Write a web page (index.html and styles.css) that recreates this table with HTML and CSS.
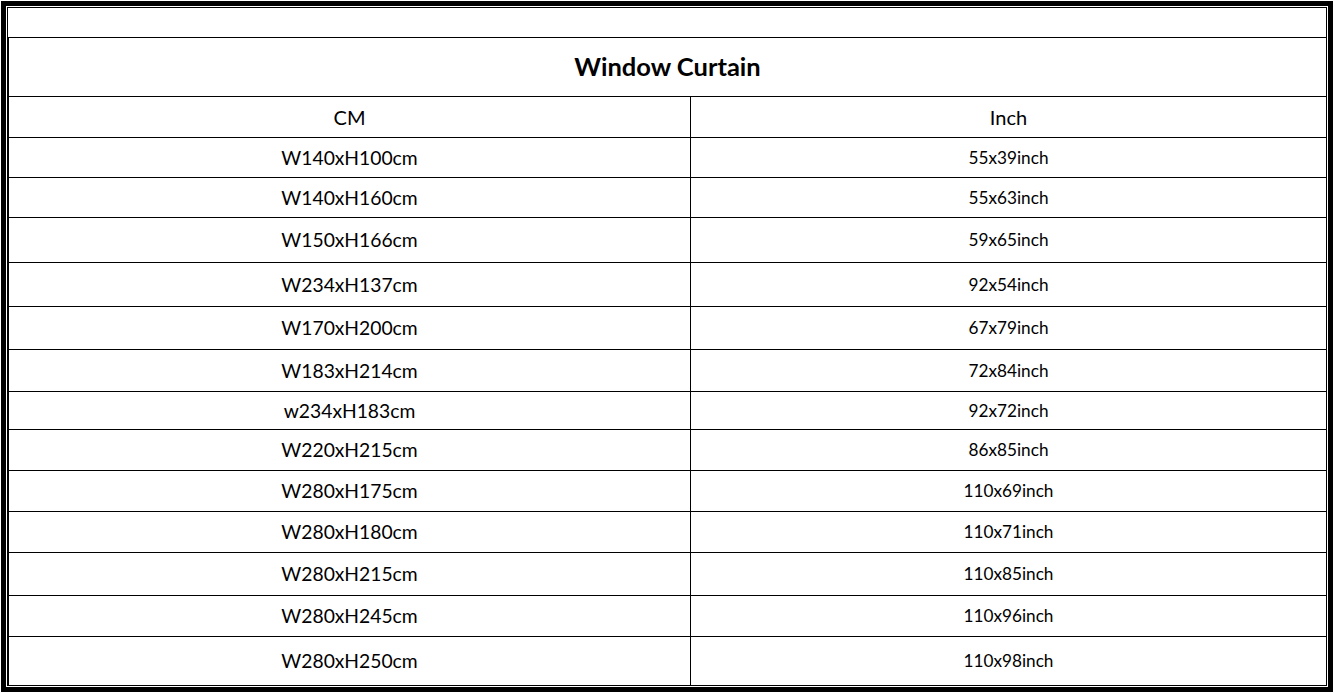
FILE: index.html
```html
<!DOCTYPE html>
<html lang="en">
<head>
<meta charset="utf-8">
<title>Window Curtain</title>
<link rel="stylesheet" href="styles.css">
</head>
<body>
<div class="frame">
  <div class="inner">
    <div class="spacer"></div>
    <table class="sizes">
      <colgroup><col class="col-cm"><col class="col-in"></colgroup>
      <tr class="r59"><th class="title" colspan="2">Window Curtain</th></tr>
      <tr class="r41"><td class="head">CM</td><td class="head">Inch</td></tr>
      <tr class="r40"><td class="cm">W140xH100cm</td><td class="in">55x39inch</td></tr>
      <tr class="r40"><td class="cm">W140xH160cm</td><td class="in">55x63inch</td></tr>
      <tr class="r45"><td class="cm">W150xH166cm</td><td class="in">59x65inch</td></tr>
      <tr class="r44"><td class="cm">W234xH137cm</td><td class="in">92x54inch</td></tr>
      <tr class="r43"><td class="cm">W170xH200cm</td><td class="in">67x79inch</td></tr>
      <tr class="r42"><td class="cm">W183xH214cm</td><td class="in">72x84inch</td></tr>
      <tr class="r38"><td class="cm">w234xH183cm</td><td class="in">92x72inch</td></tr>
      <tr class="r41"><td class="cm">W220xH215cm</td><td class="in">86x85inch</td></tr>
      <tr class="r41"><td class="cm">W280xH175cm</td><td class="in">110x69inch</td></tr>
      <tr class="r41"><td class="cm">W280xH180cm</td><td class="in">110x71inch</td></tr>
      <tr class="r43"><td class="cm">W280xH215cm</td><td class="in">110x85inch</td></tr>
      <tr class="r41"><td class="cm">W280xH245cm</td><td class="in">110x96inch</td></tr>
      <tr class="r49"><td class="cm">W280xH250cm</td><td class="in">110x98inch</td></tr>
    </table>
  </div>
</div>
</body>
</html>
```

FILE: styles.css
```css
html, body {
  margin: 0;
  padding: 0;
  background: #fff;
}
body {
  width: 1335px;
  height: 693px;
  font-family: "Lato", "Liberation Sans", sans-serif;
  color: #000;
}
.frame {
  margin: 1px 0 0 1px;
  width: 1332px;
  height: 691px;
  box-sizing: border-box;
  border: 5px solid #000;
  padding: 1px;
  background: #fff;
}
.inner {
  box-sizing: border-box;
  height: 100%;
  border: 1px solid #000;
  display: flex;
  flex-direction: column;
}
.spacer {
  height: 29px;
  flex: none;
}
.sizes {
  border-collapse: collapse;
  width: 1318px;
  table-layout: fixed;
}
.col-cm { width: 682px; }
.col-in { width: 636px; }
.sizes th, .sizes td {
  border: 1px solid #000;
  padding: 0;
  text-align: center;
  vertical-align: middle;
  line-height: 1;
}
.title {
  font-weight: 700;
  font-size: 25.5px;
}
.head { font-size: 20px; }
.cm { font-size: 19.3px; }
.in { font-size: 17.2px; }
.r59 { height: 59px; }
.r49 { height: 49px; }
.r45 { height: 45px; }
.r44 { height: 44px; }
.r43 { height: 43px; }
.r42 { height: 42px; }
.r41 { height: 41px; }
.r40 { height: 40px; }
.r38 { height: 38px; }
```
